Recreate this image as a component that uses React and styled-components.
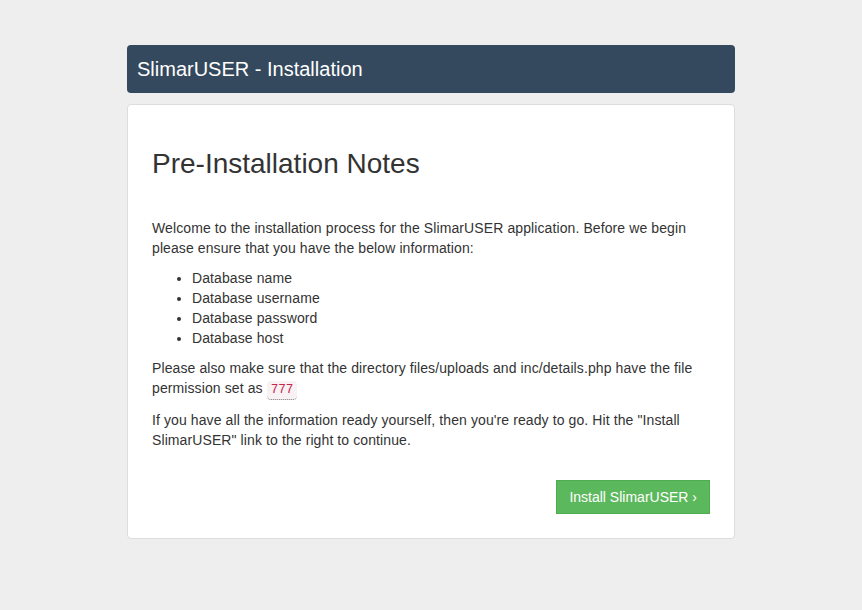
import styled, { createGlobalStyle } from "styled-components";

const GlobalStyle = createGlobalStyle`
  body {
    margin: 0;
    background: #eeeeee;
    font-family: "Liberation Sans", Arial, Helvetica, sans-serif;
    font-size: 14px;
    line-height: 20px;
    color: #333333;
  }
`;

const Wrapper = styled.div`
  width: 608px;
  margin: 45px auto 0;
  display: flex;
  flex-direction: column;
  gap: 11px;
`;

const Header = styled.div`
  height: 48px;
  display: flex;
  align-items: center;
  padding: 0 10px;
  background: #34495e;
  border-radius: 4px;
  color: #ffffff;
  font-size: 20px;
`;

const Card = styled.div`
  background: #ffffff;
  border: 1px solid #dddddd;
  border-radius: 4px;
  padding: 24px;
  letter-spacing: 0.1px;
`;

const Title = styled.h2`
  margin: 20px 0 38px;
  font-size: 28px;
  font-weight: 400;
  line-height: 1.1;
  letter-spacing: 0;
  color: #333333;
`;

const Text = styled.p`
  margin: 0 0 10px;
`;

const List = styled.ul`
  margin: 0 0 10px;
  padding-left: 40px;
`;

const Code = styled.code`
  font-family: "Liberation Mono", "Courier New", monospace;
  font-size: 90%;
  letter-spacing: 0;
  padding: 2px 4px;
  color: #c7254e;
  background: #f9f2f4;
  border-radius: 4px;
  border-bottom: 1px dotted #777;
`;

const Actions = styled.div`
  display: flex;
  justify-content: flex-end;
  margin-top: 30px;
`;

const Button = styled.a`
  display: inline-block;
  padding: 6px 12px;
  font-size: 14px;
  line-height: 20px;
  letter-spacing: 0;
  color: #ffffff;
  background: #5cb85c;
  border: 1px solid #4cae4c;
  text-decoration: none;
  cursor: pointer;
`;

export default function App() {
  const items = [
    "Database name",
    "Database username",
    "Database password",
    "Database host",
  ];

  return (
    <>
      <GlobalStyle />
      <Wrapper>
        <Header>SlimarUSER - Installation</Header>
        <Card>
          <Title>Pre-Installation Notes</Title>
          <Text>
            Welcome to the installation process for the SlimarUSER application.
            Before we begin please ensure that you have the below information:
          </Text>
          <List>
            {items.map((item) => (
              <li key={item}>{item}</li>
            ))}
          </List>
          <Text>
            Please also make sure that the directory files/uploads and
            inc/details.php have the file permission set as <Code>777</Code>
          </Text>
          <Text>
            If you have all the information ready yourself, then you're ready
            to go. Hit the "Install SlimarUSER" link to the right to continue.
          </Text>
          <Actions>
            <Button>Install SlimarUSER ›</Button>
          </Actions>
        </Card>
      </Wrapper>
    </>
  );
}
